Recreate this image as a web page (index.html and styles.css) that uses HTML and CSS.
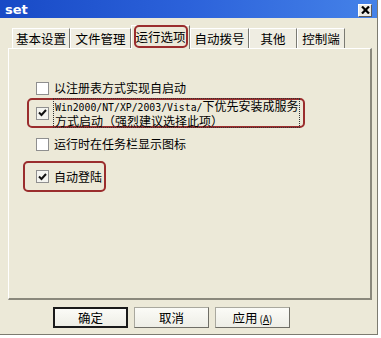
FILE: index.html
```html
<!DOCTYPE html>
<html>
<head>
<meta charset="utf-8">
<link rel="stylesheet" href="styles.css">
</head>
<body>
<div class="dialog">
  <div class="titlebar">
    <span class="title">set</span>
    <span class="close">
      <svg width="9" height="8" viewBox="0 0 9 8"><path d="M1 0.5 L8 7.5 M8 0.5 L1 7.5" stroke="#000" stroke-width="2.2"/></svg>
    </span>
  </div>
  <div class="tabs">
    <div class="tab t1">基本设置</div>
    <div class="tab t2">文件管理</div>
    <div class="tab t3 active">运行选项<span class="mark"></span></div>
    <div class="tab t4">自动拨号</div>
    <div class="tab t5">其他</div>
    <div class="tab t6">控制端</div>
  </div>
  <div class="panel">
    <div class="row r1">
      <span class="cb"></span>
      <span class="label">以注册表方式实现自启动</span>
    </div>
    <div class="row r2 hl">
      <span class="cb checked"><svg width="9" height="8" viewBox="0 0 9 8"><path d="M1 3.5 L3.5 6 L8 1" stroke="#111" stroke-width="2" fill="none"/></svg></span>
      <span class="label focus"><span class="mono">Win2000/NT/XP/2003/Vista/</span>下优先安装成服务<br>方式启动（强烈建议选择此项）</span>
    </div>
    <div class="row r3">
      <span class="cb"></span>
      <span class="label">运行时在任务栏显示图标</span>
    </div>
    <div class="row r4 hl">
      <span class="cb checked"><svg width="9" height="8" viewBox="0 0 9 8"><path d="M1 3.5 L3.5 6 L8 1" stroke="#111" stroke-width="2" fill="none"/></svg></span>
      <span class="label">自动登陆</span>
    </div>
  </div>
  <div class="buttons">
    <button class="btn default">确定</button>
    <button class="btn">取消</button>
    <button class="btn">应用<span class="acc">(<u>A</u>)</span></button>
  </div>
</div>
</body>
</html>
```
FILE: styles.css
```css
html, body {
  margin: 0;
  padding: 0;
  background: #ffffff;
}
body {
  width: 381px;
  height: 338px;
  overflow: hidden;
  font-family: "Noto Sans CJK SC", "DejaVu Sans", sans-serif;
  font-size: 12px;
  color: #000;
}
.dialog {
  width: 378px;
  height: 335px;
  background: #ece9d8;
  border-right: 1px solid #7d7b70;
  border-bottom: 1px solid #7d7b70;
  box-sizing: border-box;
  display: flex;
  flex-direction: column;
}
.titlebar {
  height: 18px;
  flex: none;
  background: linear-gradient(to right, #184ac6, #2c62da 50%, #4582e8);
  display: flex;
  align-items: center;
  justify-content: space-between;
  padding: 0 5px 0 5px;
}
.title {
  color: #fff;
  font-family: "DejaVu Sans", sans-serif;
  font-weight: bold;
  font-size: 13px;
}
.close {
  width: 14px;
  height: 13px;
  background: #ecebe5;
  border: 1px solid #fff;
  border-right-color: #5a5a5a;
  border-bottom-color: #5a5a5a;
  display: flex;
  align-items: center;
  justify-content: center;
  box-sizing: border-box;
  margin-top: 2px;
}
.tabs {
  flex: none;
  height: 23px;
  margin-top: 7px;
  padding-left: 12px;
  display: flex;
  align-items: flex-end;
  position: relative;
  z-index: 1;
}
.tab {
  height: 20px;
  line-height: 20px;
  box-sizing: border-box;
  text-align: center;
  border-left: 1px solid #fff;
  border-right: 1px solid #7a7a72;
  border-top: 1px solid #fff;
  background: #efede2;
  font-size: 12.5px;
}
.t1 { width: 58px; }
.t2 { width: 61px; }
.t3 { width: 59px; }
.t4 { width: 59px; }
.t5 { width: 48px; }
.t6 { width: 48px; }
.tab.active {
  line-height: 21px;
  background: #ece9d8;
  margin-bottom: -1px;
  height: 24px;
  border-top: 1px solid #fff;
  position: relative;
}
.mark {
  position: absolute;
  left: 2px;
  top: -1px;
  right: 1px;
  bottom: 1px;
  border: 2px solid #9a2d2d;
  border-radius: 5px;
}
.panel {
  flex: none;
  margin-left: 8px;
  width: 364px;
  height: 252px;
  box-sizing: border-box;
  border-top: 1px solid #fff;
  border-left: 1px solid #fff;
  border-right: 2px solid #8a887c;
  border-bottom: 2px solid #8a887c;
  padding-top: 32px;
  display: flex;
  flex-direction: column;
}
.row {
  display: flex;
  align-items: center;
  height: 14px;
  margin-left: 27px;
}
.cb {
  width: 13px;
  height: 13px;
  box-sizing: border-box;
  border: 1px solid #8f8f8f;
  background: #fff;
  flex: none;
  display: flex;
  align-items: center;
  justify-content: center;
}
.cb.checked {
  background: #f4f4f0;
}
.label {
  margin-left: 5px;
  line-height: 14px;
  white-space: nowrap;
}
.hl {
  border: 2px solid #9a2d2d;
  border-radius: 5px;
  box-sizing: border-box;
}
.r2 {
  margin-left: 18px;
  margin-top: 3px;
  width: 278px;
  height: 30px;
  padding-left: 7px;
}
.r2 .label {
  line-height: 13px;
  font-size: 12px;
}
.focus {
  outline: 1px dotted #333;
  outline-offset: 0px;
  padding: 0 1px;
}
.mono {
  font-family: "DejaVu Sans Mono", monospace;
  font-size: 9.8px;
}
.r3 {
  margin-top: 9px;
}
.r4 {
  margin-left: 14px;
  margin-top: 10px;
  width: 83px;
  height: 31px;
  padding-left: 11px;
}
.buttons {
  flex: none;
  margin-top: 7px;
  padding-left: 53px;
  display: flex;
  gap: 6px;
}
.btn {
  width: 75px;
  height: 21px;
  box-sizing: border-box;
  font-family: "Noto Sans CJK SC", sans-serif;
  font-size: 12.5px;
  line-height: 17px;
  padding: 0;
  background: linear-gradient(#fbfbf7, #eeeee6);
  border: 1px solid #a9a89e;
  border-right-color: #6f6e66;
  border-bottom-color: #6f6e66;
  color: #000;
}
.btn.default {
  border: 2px solid #1a1a1a;
}
.acc {
  font-size: 10px;
  margin-left: 2px;
}
```
